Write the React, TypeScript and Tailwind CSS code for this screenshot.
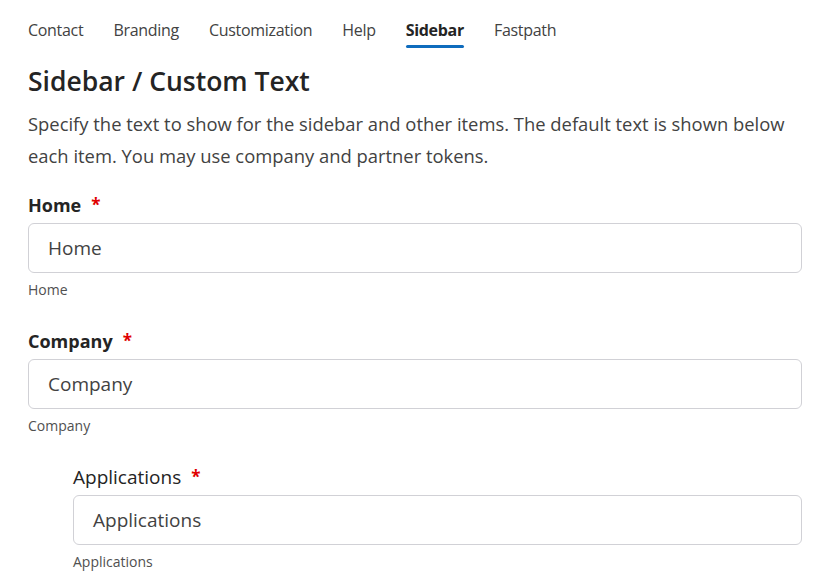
import React from 'react';

const tabs = ['Contact', 'Branding', 'Customization', 'Help', 'Sidebar', 'Fastpath'];

interface FieldProps {
  label: string;
  value: string;
  hint: string;
  bold?: boolean;
  indent?: boolean;
}

function Field({ label, value, hint, bold = true, indent = false }: FieldProps) {
  return (
    <div className={indent ? 'pl-[45px]' : ''}>
      <div className={`flex items-center h-[26px] text-[#242424] ${bold ? 'font-bold text-[18px]' : 'text-[19px]'}`}>
        <span>{label}</span>
        <span className="ml-[10px] text-[#e00000] font-bold text-[17px]">*</span>
      </div>
      <div className="mt-[5px] h-[50px] rounded-[6px] border border-[#d1d1d6] bg-white flex items-center px-[19px] text-[19px] text-[#424242]">
        {value}
      </div>
      <div className="mt-[6px] text-[14px] text-[#505050] h-[22px]">{hint}</div>
    </div>
  );
}

export default function App() {
  return (
    <div
      className="w-[823px] h-[584px] bg-white overflow-hidden pl-[28px] pr-[21px] text-[#242424]"
      style={{ fontFamily: '"Open Sans", "Noto Sans", sans-serif' }}
    >
      <div className="flex gap-[30px] pt-[18px] text-[16px] text-[#424242]">
        {tabs.map(t => (
          <div key={t} className="flex flex-col">
            <span className={`leading-[24px] tracking-[-0.3px] ${t === 'Sidebar' ? 'font-bold text-[#242424]' : ''}`}>{t}</span>
            <span className={`mt-[3px] h-[3px] rounded-sm ${t === 'Sidebar' ? 'bg-[#0f6cbd]' : ''}`} />
          </div>
        ))}
      </div>
      <h1 className="mt-[16px] text-[26.5px] font-semibold leading-[34px] text-[#242424]">Sidebar / Custom Text</h1>
      <p className="mt-[10px] text-[18.4px] leading-[32px] text-[#424242]">
        Specify the text to show for the sidebar and other items. The default text is shown below each item. You may use company and partner tokens.
      </p>
      <div className="mt-[20px] flex flex-col gap-[27px]">
        <Field label="Home" value="Home" hint="Home" />
        <Field label="Company" value="Company" hint="Company" />
        <Field label="Applications" value="Applications" hint="Applications" bold={false} indent />
      </div>
    </div>
  );
}
